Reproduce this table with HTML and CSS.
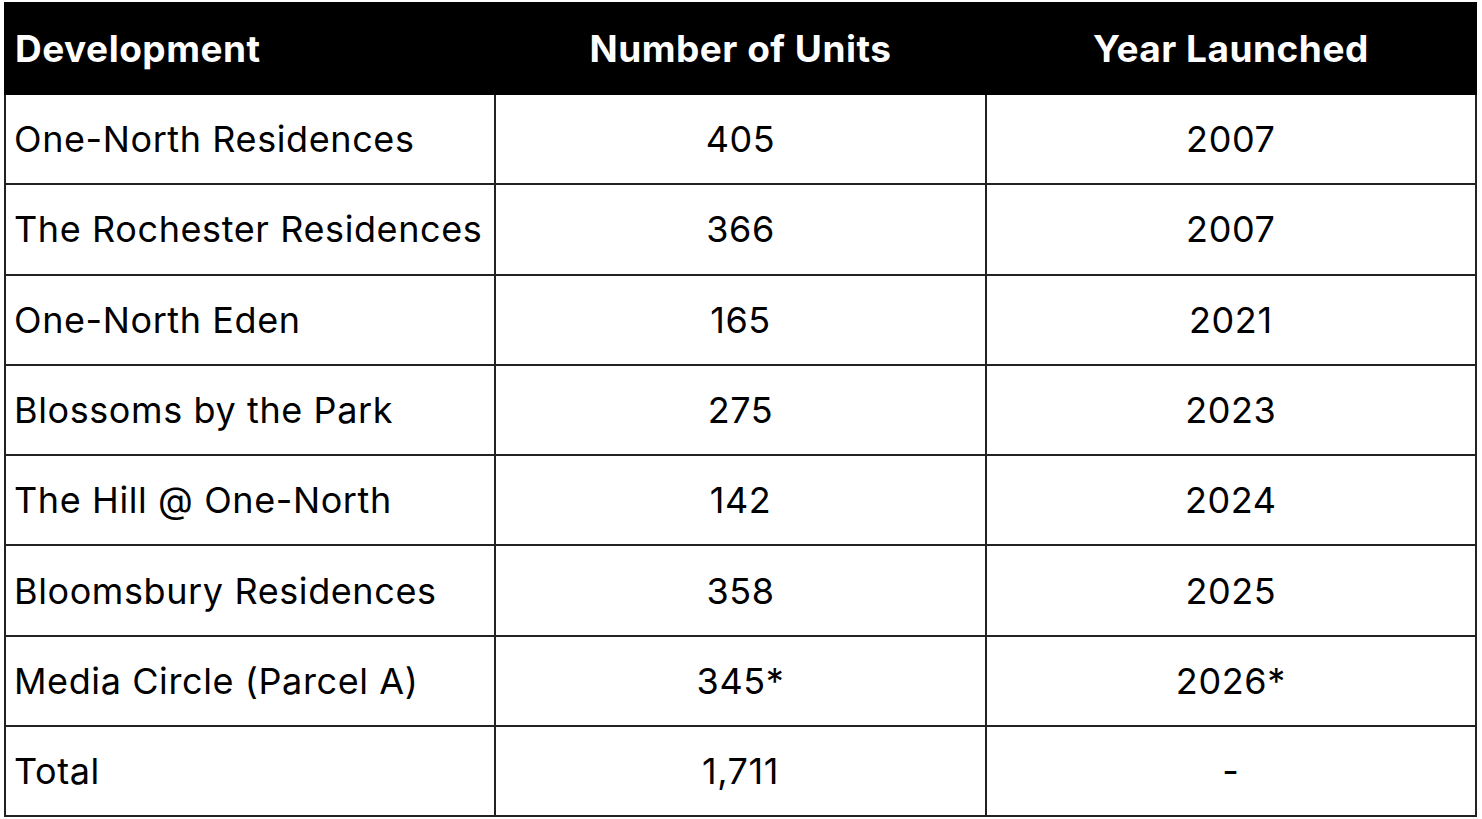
FILE: index.html
```html
<!DOCTYPE html>
<html lang="en">
<head>
<meta charset="utf-8">
<title>Developments</title>
<link rel="stylesheet" href="styles.css">
</head>
<body>
<div class="wrap">
<table class="dev-table">
<colgroup><col class="c"><col class="c"><col class="c"></colgroup>
<thead>
<tr><th class="left">Development</th><th>Number of Units</th><th>Year Launched</th></tr>
</thead>
<tbody>
<tr><td class="left">One-North Residences</td><td>405</td><td>2007</td></tr>
<tr><td class="left">The Rochester Residences</td><td>366</td><td>2007</td></tr>
<tr><td class="left">One-North Eden</td><td>165</td><td>2021</td></tr>
<tr><td class="left">Blossoms by the Park</td><td>275</td><td>2023</td></tr>
<tr><td class="left">The Hill @ One-North</td><td>142</td><td>2024</td></tr>
<tr><td class="left">Bloomsbury Residences</td><td>358</td><td>2025</td></tr>
<tr><td class="left">Media Circle (Parcel A)</td><td>345*</td><td>2026*</td></tr>
<tr><td class="left">Total</td><td>1,711</td><td>-</td></tr>
</tbody>
</table>
</div>
</body>
</html>
```
FILE: styles.css
```css
html, body {
  margin: 0;
  padding: 0;
  background: #ffffff;
}
.wrap {
  padding: 2px 5px 0 4px;
}
.dev-table {
  width: 1473px;
  border-collapse: collapse;
  table-layout: fixed;
  font-family: "Inter", "Liberation Sans", sans-serif;
  color: #000;
}
.dev-table .c {
  width: 33.333%;
}
.dev-table th {
  background: #000;
  color: #fff;
  font-weight: 700;
  font-size: 37px;
  letter-spacing: 0.5px;
  height: 91px;
  padding: 0 9px;
  text-align: center;
  border: 2px solid #000;
  box-sizing: border-box;
}
.dev-table td {
  font-size: 36px;
  letter-spacing: 0.6px;
  height: 90.3px;
  padding: 0 8px;
  text-align: center;
  border: 2px solid #222;
  box-sizing: border-box;
}
.dev-table .left {
  text-align: left;
}
```
